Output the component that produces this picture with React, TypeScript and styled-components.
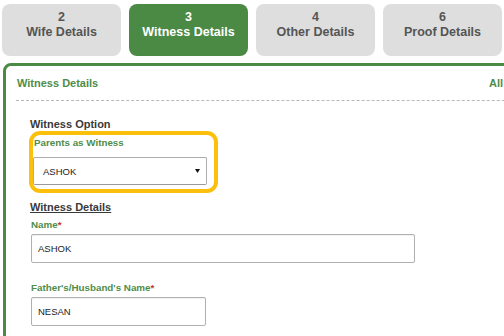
import React from "react";
import styled, { createGlobalStyle } from "styled-components";

const GlobalStyle = createGlobalStyle`
  html, body {
    margin: 0;
    padding: 0;
    background: #ffffff;
    overflow: hidden;
  }
  body {
    font-family: "Liberation Sans", Arial, sans-serif;
  }
  * { box-sizing: border-box; }
`;

const GREEN = "#4a8a44";
const LABEL_GREEN = "#4f8d4a";

const Page = styled.div`
  width: 504px;
  height: 336px;
  padding: 4px 0 0 2px;
  overflow: hidden;
`;

const TabRow = styled.div`
  display: flex;
  gap: 8px;
`;

const Tab = styled.div<{ $active?: boolean }>`
  flex: 0 0 119px;
  height: 52px;
  border-radius: 8px;
  padding-top: 6px;
  background: ${(p) => (p.$active ? GREEN : "#dedede")};
  color: ${(p) => (p.$active ? "#ffffff" : "#555555")};
  font-size: 12.5px;
  font-weight: bold;
  line-height: 15px;
  text-align: center;
`;

const Panel = styled.section`
  margin: 7px 0 0 1px;
  width: 640px;
  height: 320px;
  border: 3px solid ${GREEN};
  border-radius: 8px;
`;

const PanelHeader = styled.div`
  display: flex;
  margin: 0 10px;
  padding: 10px 0 10px 1px;
  border-bottom: 1px dashed #b8b8b8;
  font-size: 11px;
  font-weight: bold;
  line-height: 14px;
  color: ${LABEL_GREEN};
`;

const HeaderTitle = styled.span`
  flex: 0 0 472px;
`;

const HeaderNote = styled.span`
  white-space: nowrap;
`;

const PanelBody = styled.div`
  padding: 16px 0 0 24px;
  display: flex;
  flex-direction: column;
  align-items: flex-start;
`;

const SectionTitle = styled.div<{ $underline?: boolean; $top?: number }>`
  margin-top: ${(p) => p.$top ?? 0}px;
  font-size: 11px;
  font-weight: bold;
  line-height: 14px;
  color: #3a3a3a;
  text-decoration: ${(p) => (p.$underline ? "underline" : "none")};
`;

const Highlight = styled.div`
  margin-left: -1px;
  width: 189px;
  border: 4px solid #fbbf0c;
  border-radius: 11px;
  padding: 2px 0 4px 0;
`;

const FieldLabel = styled.div<{ $top?: number }>`
  margin-top: ${(p) => p.$top ?? 0}px;
  margin-left: 1px;
  font-size: 9.8px;
  font-weight: bold;
  line-height: 12px;
  color: ${LABEL_GREEN};
`;

const Required = styled.span`
  color: #c0392b;
`;

const SelectBox = styled.div`
  margin-top: 8px;
  width: 174px;
  height: 28px;
  display: flex;
  align-items: center;
  justify-content: space-between;
  padding: 0 6px 0 9px;
  border: 1px solid #acacac;
  border-bottom-color: #9a9a9a;
  border-radius: 2px;
  background: #ffffff;
  font-size: 9.5px;
  color: #222222;
`;

const TextInput = styled.input<{ $width: number }>`
  margin: 3px 0 0 1px;
  width: ${(p) => p.$width}px;
  height: 29px;
  padding: 0 6px;
  border: 1px solid #b0b0b0;
  border-radius: 2px;
  box-shadow: inset 0 1px 1px rgba(0, 0, 0, 0.06);
  background: #ffffff;
  font-family: "Liberation Sans", Arial, sans-serif;
  font-size: 9.5px;
  color: #222222;
  outline: none;
`;

const tabs = [
  { n: "2", label: "Wife Details" },
  { n: "3", label: "Witness Details", active: true },
  { n: "4", label: "Other Details" },
  { n: "6", label: "Proof Details" },
];

export default function App() {
  return (
    <>
      <GlobalStyle />
      <Page>
        <TabRow>
          {tabs.map((t) => (
            <Tab key={t.n} $active={t.active}>
              {t.n}
              <br />
              {t.label}
            </Tab>
          ))}
        </TabRow>
        <Panel>
          <PanelHeader>
            <HeaderTitle>Witness Details</HeaderTitle>
            <HeaderNote>All</HeaderNote>
          </PanelHeader>
          <PanelBody>
            <SectionTitle>Witness Option</SectionTitle>
            <Highlight>
              <FieldLabel>Parents as Witness</FieldLabel>
              <SelectBox>
                <span>ASHOK</span>
                <svg width="5" height="4" viewBox="0 0 5 4">
                  <path d="M0 0 L5 0 L2.5 4 Z" fill="#111" />
                </svg>
              </SelectBox>
            </Highlight>
            <SectionTitle $underline $top={7}>
              Witness Details
            </SectionTitle>
            <FieldLabel $top={5}>
              Name<Required>*</Required>
            </FieldLabel>
            <TextInput $width={384} readOnly value="ASHOK" />
            <FieldLabel $top={19}>
              Father's/Husband's Name<Required>*</Required>
            </FieldLabel>
            <TextInput $width={175} readOnly value="NESAN" />
          </PanelBody>
        </Panel>
      </Page>
    </>
  );
}
